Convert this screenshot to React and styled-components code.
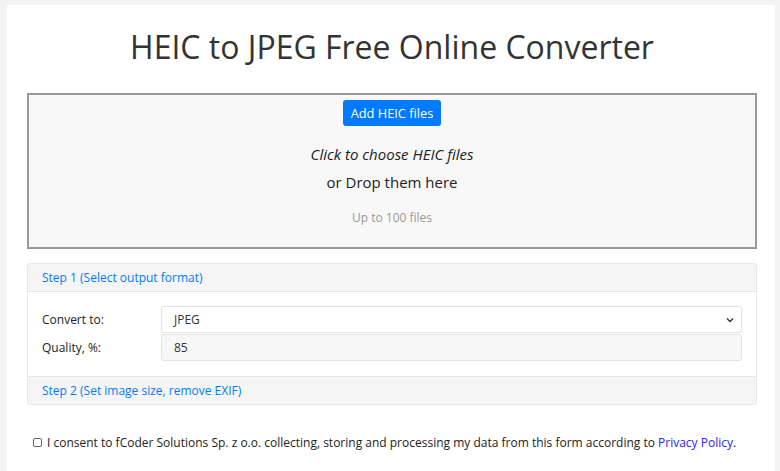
import React from "react";
import styled, { createGlobalStyle } from "styled-components";

const Global = createGlobalStyle`
  html, body { margin: 0; padding: 0; background: #f3f3f3; }
  body { font-family: "Open Sans", "Noto Sans", sans-serif; color: #212529; }
  * { box-sizing: border-box; }
`;

const Page = styled.div`
  margin: 5px 5px 0 7px;
  background: #fff;
  padding: 0 18px 40px 20px;
  min-height: 480px;
`;

const Title = styled.h1`
  margin: 0;
  padding: 22px 0 26px;
  text-align: center;
  font-weight: 400;
  font-size: 32px;
  line-height: 40px;
  color: #333;
`;

const DropZone = styled.div`
  border: 2px solid #999;
  background: #f8f8f8;
  height: 156px;
  display: flex;
  flex-direction: column;
  align-items: center;
  padding-top: 5px;
`;

const AddButton = styled.button`
  background: #007bff;
  color: #fff;
  border: none;
  border-radius: 3px;
  height: 26px;
  padding: 0 8px;
  font-family: inherit;
  font-size: 12.8px;
  line-height: 26px;
  cursor: pointer;
`;

const DropLine = styled.div`
  font-size: 15px;
  line-height: 20px;
  color: #222;
  font-style: ${(p) => (p.$italic ? "italic" : "normal")};
  margin-top: ${(p) => p.$mt}px;
`;

const Hint = styled.div`
  font-size: 12px;
  line-height: 16px;
  color: #999;
  margin-top: 18px;
`;

const Card = styled.div`
  margin-top: 14px;
  border: 1px solid #e6e6e6;
  border-radius: 3px;
  overflow: hidden;
`;

const CardHeader = styled.div`
  background: #f5f5f5;
  height: 28px;
  padding: 0 14px;
  display: flex;
  align-items: center;
  font-size: 12px;
  color: #007bff;
  border-bottom: ${(p) => (p.$last ? "none" : "1px solid #e6e6e6")};
  border-top: ${(p) => (p.$last ? "1px solid #e6e6e6" : "none")};
`;

const CardBody = styled.div`
  padding: 14px 14px 15px;
  display: flex;
  flex-direction: column;
  gap: 1px;
`;

const Row = styled.div`
  display: grid;
  grid-template-columns: 119px 1fr;
  align-items: center;
`;

const Label = styled.label`
  font-size: 12px;
  color: #222;
`;

const Field = styled.div`
  height: 27px;
  border: 1px solid #e2e2e2;
  border-radius: 3px;
  background: ${(p) => (p.$muted ? "#f7f7f7" : "#fff")};
  display: flex;
  align-items: center;
  justify-content: space-between;
  padding: 0 7px 0 12px;
  font-size: 12px;
  color: #333;
`;

const Consent = styled.div`
  margin-top: 29px;
  padding-left: 6px;
  display: flex;
  align-items: center;
  gap: 5px;
  font-size: 12px;
  line-height: 17px;
  color: #222;
  white-space: nowrap;
`;

const Box = styled.span`
  width: 9px;
  height: 9px;
  border: 1px solid #666;
  border-radius: 2px;
  background: #fff;
  flex: none;
`;

const Link = styled.a`
  color: #2a22ff;
  text-decoration: none;
`;

const Chevron = () => (
  <svg width="8" height="6" viewBox="0 0 8 6">
    <path d="M1 1.5 L4 4.5 L7 1.5" fill="none" stroke="#333" strokeWidth="1.4" />
  </svg>
);

export default function App() {
  return (
    <>
      <Global />
      <Page>
        <Title>HEIC to JPEG Free Online Converter</Title>
        <DropZone>
          <AddButton>Add HEIC files</AddButton>
          <DropLine $italic $mt={18}>Click to choose HEIC files</DropLine>
          <DropLine $mt={8}>or Drop them here</DropLine>
          <Hint>Up to 100 files</Hint>
        </DropZone>
        <Card>
          <CardHeader>Step 1 (Select output format)</CardHeader>
          <CardBody>
            <Row>
              <Label>Convert to:</Label>
              <Field>
                <span>JPEG</span>
                <Chevron />
              </Field>
            </Row>
            <Row>
              <Label>Quality, %:</Label>
              <Field $muted>85</Field>
            </Row>
          </CardBody>
          <CardHeader $last>Step 2 (Set image size, remove EXIF)</CardHeader>
        </Card>
        <Consent>
          <Box />
          <span>
            I consent to fCoder Solutions Sp. z o.o. collecting, storing and processing my data from this form according to{" "}
            <Link href="#">Privacy Policy</Link>.
          </span>
        </Consent>
      </Page>
    </>
  );
}
